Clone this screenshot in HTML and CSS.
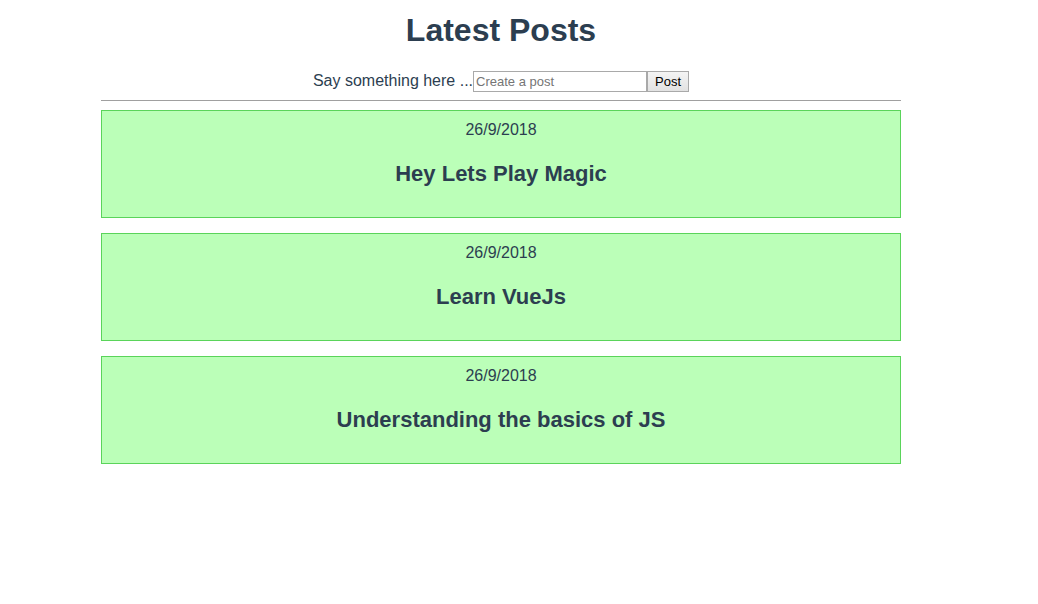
FILE: index.html
```html
<!DOCTYPE html>
<html>
<head>
<meta charset="utf-8">
<link rel="stylesheet" href="styles.css">
</head>
<body>
<div class="app">
  <div class="container">
    <h1 class="title">Latest Posts</h1>
    <div class="create">
      <label class="create-label" for="post">Say something here ...</label><input class="create-input" id="post" type="text" placeholder="Create a post"><button class="create-btn">Post</button>
    </div>
    <hr class="divider">
    <div class="posts">
      <div class="post">
        <p class="post-date">26/9/2018</p>
        <p class="post-text">Hey Lets Play Magic</p>
      </div>
      <div class="post">
        <p class="post-date">26/9/2018</p>
        <p class="post-text">Learn VueJs</p>
      </div>
      <div class="post">
        <p class="post-date">26/9/2018</p>
        <p class="post-text">Understanding the basics of JS</p>
      </div>
    </div>
  </div>
</div>
</body>
</html>
```
FILE: styles.css
```css
html, body {
  margin: 0;
  padding: 0;
  background: #fff;
}
body {
  padding: 12px 8px 8px 8px;
}
.app {
  width: 986px;
  font-family: "Liberation Sans", Arial, Helvetica, sans-serif;
  color: #2c3e50;
  text-align: center;
}
.container {
  width: 800px;
  margin: 0 auto;
}
.title {
  font-size: 32px;
  font-weight: bold;
  margin: 0 0 21px 0;
  line-height: 37px;
}
.create {
  display: flex;
  justify-content: center;
  align-items: center;
  height: 22px;
  font-size: 16px;
}
.create-label {
  color: #2c3e50;
}
.create-input {
  box-sizing: border-box;
  width: 174px;
  height: 21px;
  margin: 0;
  padding: 1px 2px;
  border: 1px solid #a9a9a9;
  font-family: "Liberation Sans", Arial, sans-serif;
  font-size: 13px;
  color: #000;
}
.create-input::placeholder {
  color: #757575;
}
.create-btn {
  box-sizing: border-box;
  height: 21px;
  margin: 0;
  padding: 1px 7px;
  border: 1px solid #a9a9a9;
  background: linear-gradient(#f4f4f4, #e2e2e2);
  font-family: "Liberation Sans", Arial, sans-serif;
  font-size: 13px;
  color: #000;
}
.divider {
  margin: 8px 0 9px 0;
  border: 0;
  border-top: 1px solid #a0a0a0;
  height: 0;
}
.posts {
  display: flex;
  flex-direction: column;
  gap: 15px;
}
.post {
  box-sizing: border-box;
  height: 108px;
  background: #bbffb8;
  border: 1px solid #5ad45a;
  padding: 10px 0;
}
.post-date {
  margin: 0;
  font-size: 16px;
  line-height: 18px;
}
.post-text {
  margin: 23px 0 0 0;
  font-size: 22px;
  font-weight: bold;
  line-height: 24px;
}
```
